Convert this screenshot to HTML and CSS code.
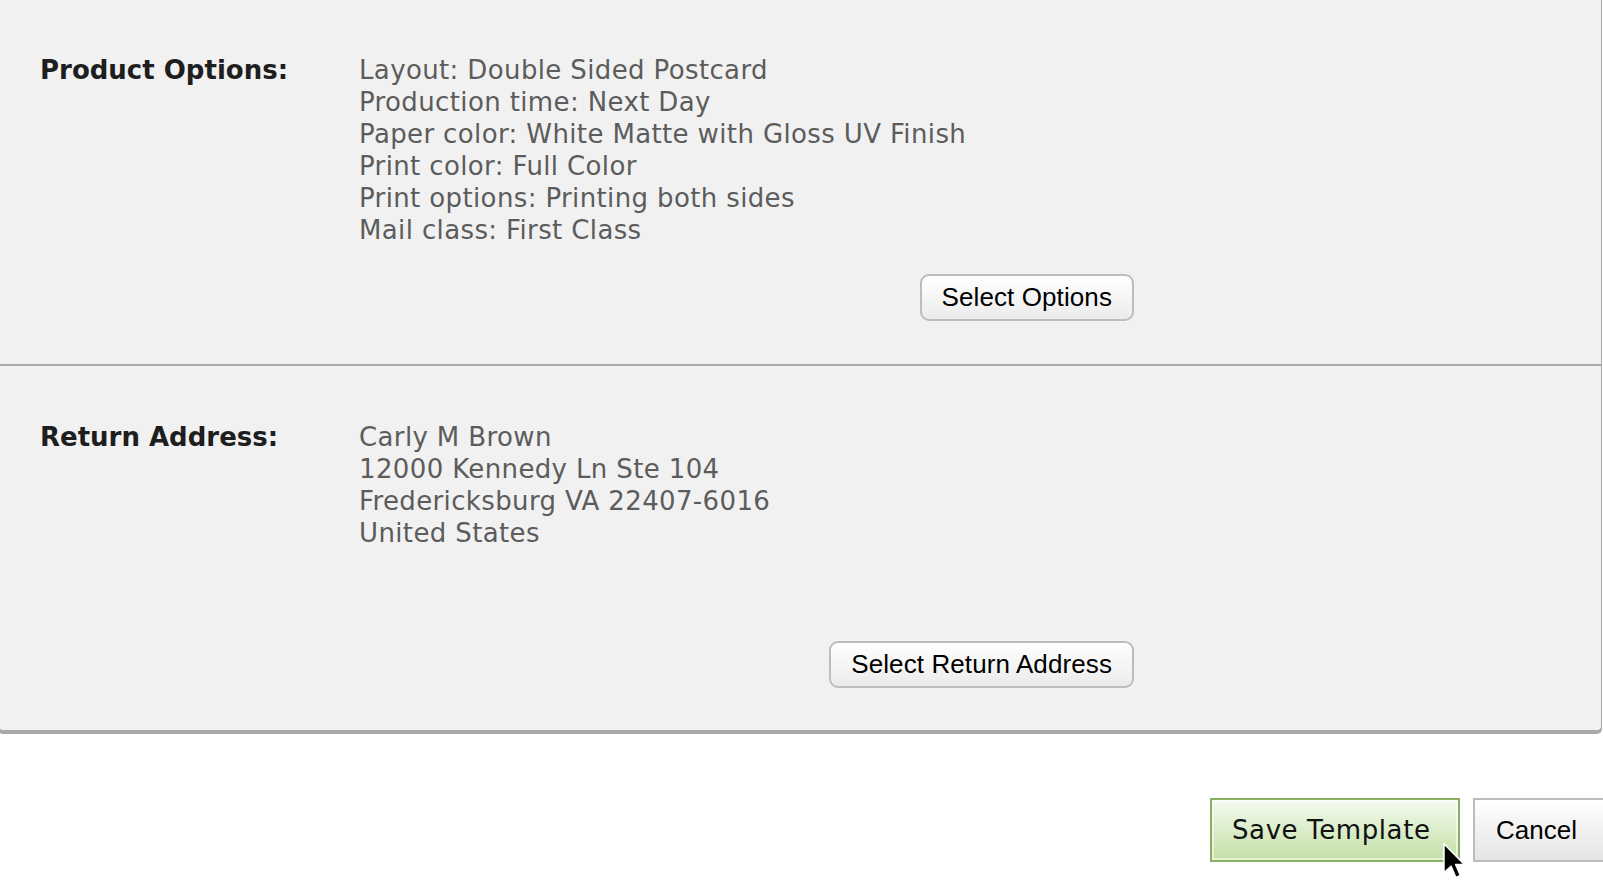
FILE: index.html
```html
<!DOCTYPE html>
<html lang="en">
<head>
    <meta charset="UTF-8">
    <meta name="viewport" content="width=device-width, initial-scale=1.0">
    <title>Edit Template</title>
    <link rel="stylesheet" href="styles.css">
</head>
<body>
    <div class="panel">
        <div class="section section-options">
            <div class="label">Product Options:</div>
            <div class="value">
                <div class="lines">
                    <div>Layout: Double Sided Postcard</div>
                    <div>Production time: Next Day</div>
                    <div>Paper color: White Matte with Gloss UV Finish</div>
                    <div>Print color: Full Color</div>
                    <div>Print options: Printing both sides</div>
                    <div>Mail class: First Class</div>
                </div>
                <div class="actions">
                    <button class="select-btn" type="button">Select Options</button>
                </div>
            </div>
        </div>

        <div class="section section-address">
            <div class="label">Return Address:</div>
            <div class="value">
                <div class="lines address">
                    <div>Carly M Brown</div>
                    <div>12000 Kennedy Ln Ste 104</div>
                    <div>Fredericksburg VA 22407-6016</div>
                    <div>United States</div>
                </div>
                <div class="actions">
                    <button class="select-btn" type="button">Select Return Address</button>
                </div>
            </div>
        </div>
    </div>

    <div class="footer">
        <div class="footer-buttons">
            <button class="save-btn" type="button">Save Template</button>
            <button class="cancel-btn" type="button">Cancel</button>
            <!-- mouse pointer hovering the save button -->
            <svg class="cursor" width="24" height="38" viewBox="0 0 20 32">
                <path d="M1.5 1.5 L1.5 26 L7.5 20.5 L11.5 30 L15.5 28.3 L11.5 19 L19 19 Z" fill="#000" stroke="#fff" stroke-width="1.4" stroke-linejoin="round"/>
            </svg>
        </div>
    </div>
</body>
</html>
```

FILE: styles.css
```css
/* Basic page setup */
body {
    margin: 0;
    padding: 0;
    background: #fff;
    font-family: "DejaVu Sans", Verdana, sans-serif;
}

.panel {
    margin: 0 1px 0 -2px;
    background-color: #f1f1f1;
    border: 1px solid #a9a9ab;
    border-top: none;
    border-radius: 0 0 5px 5px;
    box-shadow: 0 3px 0 #a9a9ab;
}

.section {
    display: grid;
    grid-template-columns: 319px 775px;
    padding-left: 41px;
}

.section-options {
    padding-top: 54px;
    padding-bottom: 43px;
    border-bottom: 2px solid #a8a8ad;
}

.section-address {
    padding-top: 55px;
    padding-bottom: 42px;
}

.label {
    font-size: 26px;
    line-height: 32px;
    font-weight: bold;
    color: #1e1e1e;
}

.lines {
    font-size: 26px;
    line-height: 32px;
    letter-spacing: 0.37px;
    color: #5c5c5c;
}

.address {
    min-height: 220px;
}

.actions {
    display: flex;
    justify-content: flex-end;
    margin-top: 28px;
}

.address + .actions {
    margin-top: 0;
}

.select-btn {
    font-family: "Liberation Sans", Arial, sans-serif;
    font-size: 26px;
    letter-spacing: 0.1px;
    color: #000;
    height: 47px;
    padding: 0 20px;
    border: 2px solid #bdbdbd;
    border-radius: 9px;
    background: linear-gradient(to bottom, #ffffff, #ebebeb);
}

/* footer clips the cancel button at the window edge */
.footer {
    overflow: hidden;
    margin-top: 67px;
    padding-bottom: 24px;
}

.footer-buttons {
    position: relative;
    display: flex;
    justify-content: flex-end;
    gap: 13px;
    margin-right: -40px;
}

.save-btn {
    font-family: "DejaVu Sans", Verdana, sans-serif;
    font-size: 26px;
    letter-spacing: 0.6px;
    color: #111;
    width: 250px;
    height: 64px;
    padding: 0 0 0 4px;
    text-align: left;
    text-indent: 16px;
    border: 2px solid #8aae62;
    background: linear-gradient(to bottom, #f4faef, #c2e0a5);
    box-shadow: inset 0 0 0 2px rgba(255, 255, 255, 0.55);
}

.cancel-btn {
    font-family: "Liberation Sans", Arial, sans-serif;
    font-size: 26px;
    color: #000;
    width: 170px;
    height: 64px;
    padding: 0 0 0 21px;
    text-align: left;
    border: 2px solid #bcbcbc;
    background: linear-gradient(to bottom, #ffffff, #e4e4e4);
}

.cursor {
    position: absolute;
    left: 1442px;
    top: 44px;
}
```
